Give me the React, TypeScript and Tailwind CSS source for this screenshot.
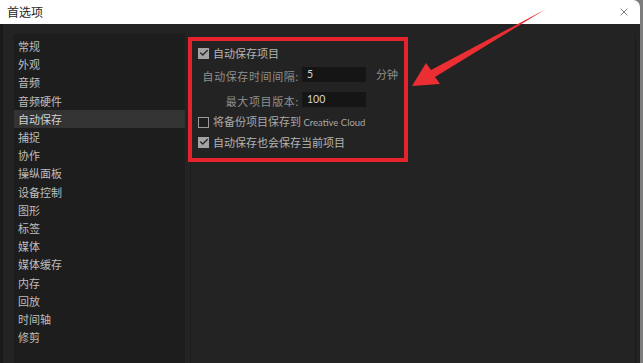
import { Check, X } from "lucide-react";

const items = [
  "常规",
  "外观",
  "音频",
  "音频硬件",
  "自动保存",
  "捕捉",
  "协作",
  "操纵面板",
  "设备控制",
  "图形",
  "标签",
  "媒体",
  "媒体缓存",
  "内存",
  "回放",
  "时间轴",
  "修剪",
];

function Box({ checked }: { checked?: boolean }) {
  if (checked) {
    return (
      <span className="w-[11px] h-[11px] bg-[#a3a3a3] flex items-center justify-center shrink-0">
        <Check size={10} strokeWidth={3.2} color="#262626" />
      </span>
    );
  }
  return <span className="w-[11px] h-[11px] border border-[#9a9a9a] bg-[#1e1e1e] shrink-0" />;
}

export default function App() {
  return (
    <div className="relative w-[643px] h-[363px] overflow-hidden bg-[#7d7d7d] font-['Noto_Sans_CJK_SC','Liberation_Sans',sans-serif]">
      <div className="w-[640px] h-full flex flex-col rounded-tr-[7px] overflow-hidden">
        {/* title bar */}
        <div className="h-[24px] shrink-0 bg-white flex items-center justify-between pl-[7px] pr-[10px]">
          <span className="text-[12px] text-[#1f1f1f] leading-none">首选项</span>
          <X size={12} strokeWidth={1.3} color="#333" />
        </div>

        {/* body */}
        <div className="flex-1 flex bg-[#232323] border-l-[3px] border-[#1a1a1a] pl-[11px] pt-[10px] min-h-0">
          <div className="w-[171px] bg-[#1d1d1d] pt-[3.5px] shrink-0">
            {items.map((it) => (
              <div
                key={it}
                className={
                  it === "自动保存"
                    ? "h-[18.2px] flex items-center pl-[4px] text-[11px] leading-none text-[#d2d2d2] bg-[#333333]"
                    : "h-[18.2px] flex items-center pl-[4px] text-[11px] leading-none text-[#bdbdbd]"
                }
              >
                {it}
              </div>
            ))}
          </div>

          <div className="w-[5px] shrink-0" />

          <div className="flex-1 border-l border-r border-[#1b1b1b] mr-[4px] pl-[7px] pt-[12px] flex flex-col text-[11px] leading-none">
            <div className="h-[14px] flex items-center gap-[4px]">
              <Box checked />
              <span className="text-[#b4b4b4]">自动保存项目</span>
            </div>

            <div className="h-[15px] mt-[7px] flex items-center">
              <span className="w-[101px] text-right text-[#8f8f8f] pt-[3px] tracking-[0.6px]">自动保存时间间隔:</span>
              <span className="ml-[3px] w-[64px] h-[15px] bg-[#151515] flex items-center pl-[5px] font-['Lato',sans-serif] text-[10.5px] text-[#d4d4d4]">
                5
              </span>
              <span className="ml-[10px] text-[#8f8f8f]">分钟</span>
            </div>

            <div className="h-[15px] mt-[10px] flex items-center">
              <span className="w-[101px] text-right text-[#8f8f8f] pt-[3px] tracking-[0.6px]">最大项目版本:</span>
              <span className="ml-[3px] w-[64px] h-[15px] bg-[#151515] flex items-center pl-[5px] font-['Lato',sans-serif] text-[10.5px] text-[#d4d4d4]">
                100
              </span>
            </div>

            <div className="h-[14px] mt-[8px] flex items-center gap-[4px]">
              <Box />
              <span className="text-[#a8a8a8]">
                将备份项目保存到 <span className="font-['Lato',sans-serif] text-[9.5px]">Creative Cloud</span>
              </span>
            </div>

            <div className="h-[14px] mt-[6px] flex items-center gap-[4px]">
              <Box checked />
              <span className="text-[#b4b4b4]">自动保存也会保存当前项目</span>
            </div>
          </div>
        </div>
      </div>

      {/* annotation */}
      <div className="absolute left-[188px] top-[37px] w-[220px] h-[125px] border-4 border-[#e6232c]" />
      <svg className="absolute left-0 top-0" width="643" height="363" viewBox="0 0 643 363">
        <polygon
          points="412,86 426,63 431,70 546,9 435,77 440,84"
          fill="#ea2e33"
        />
      </svg>
    </div>
  );
}
